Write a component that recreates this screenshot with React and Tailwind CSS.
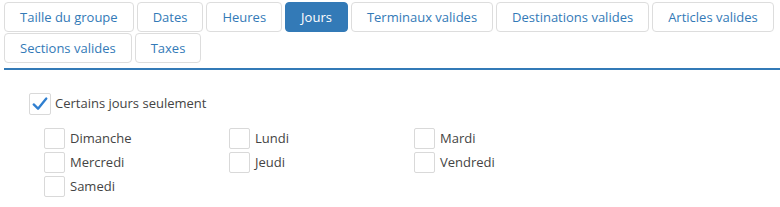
import { useState } from 'react';

const tabs = [
  'Taille du groupe',
  'Dates',
  'Heures',
  'Jours',
  'Terminaux valides',
  'Destinations valides',
  'Articles valides',
  'Sections valides',
  'Taxes',
];

const days = ['Dimanche', 'Lundi', 'Mardi', 'Mercredi', 'Jeudi', 'Vendredi', 'Samedi'];

function Box({ checked, size = 'w-[21px] h-[21px]' }) {
  return (
    <span className={`${size} flex items-center justify-center border border-[#d9d9d9] rounded-[2px] bg-white shrink-0`}>
      {checked && (
        <svg viewBox="0 0 20 20" className="w-[18px] h-[18px]">
          <path d="M3 10.5 L7.8 15.2 L17 4" fill="none" stroke="#2f7fd0" strokeWidth="2.6" strokeLinecap="round" strokeLinejoin="round" />
        </svg>
      )}
    </span>
  );
}

export default function App() {
  const [active, setActive] = useState('Jours');
  const [only, setOnly] = useState(true);
  const [sel, setSel] = useState({});

  return (
    <div className="w-[780px] h-[207px] bg-white text-[13px] pl-1" style={{ fontFamily: '"Open Sans", "Noto Sans", sans-serif' }}>
      {/* Tabs */}
      <div className="flex flex-wrap gap-x-[3px] gap-y-[1px] pt-[2px] pb-[5px] border-b-2 border-[#337ab7]">
        {tabs.map((t) => (
          <button
            key={t}
            onClick={() => setActive(t)}
            className={`h-[30px] px-[15px] rounded-[4px] border leading-none ${
              active === t
                ? 'bg-[#337ab7] border-[#337ab7] text-white'
                : 'bg-white border-[#dddddd] text-[#337ab7]'
            }`}
          >
            {t}
          </button>
        ))}
      </div>

      {/* Content */}
      <div className="pl-[25px] pt-[23px]">
        <label className="flex items-center gap-[4px] text-[#444] cursor-pointer" onClick={() => setOnly(!only)}>
          <Box checked={only} size="w-[22px] h-[22px]" />
          <span>Certains jours seulement</span>
        </label>

        <div className="grid grid-cols-[185px_185px_185px] gap-y-[3px] pl-[15px] pt-[13px]">
          {days.map((d) => (
            <label
              key={d}
              className="flex items-center gap-[5px] text-[#444] cursor-pointer"
              onClick={() => setSel({ ...sel, [d]: !sel[d] })}
            >
              <Box checked={!!sel[d]} />
              <span>{d}</span>
            </label>
          ))}
        </div>
      </div>
    </div>
  );
}
